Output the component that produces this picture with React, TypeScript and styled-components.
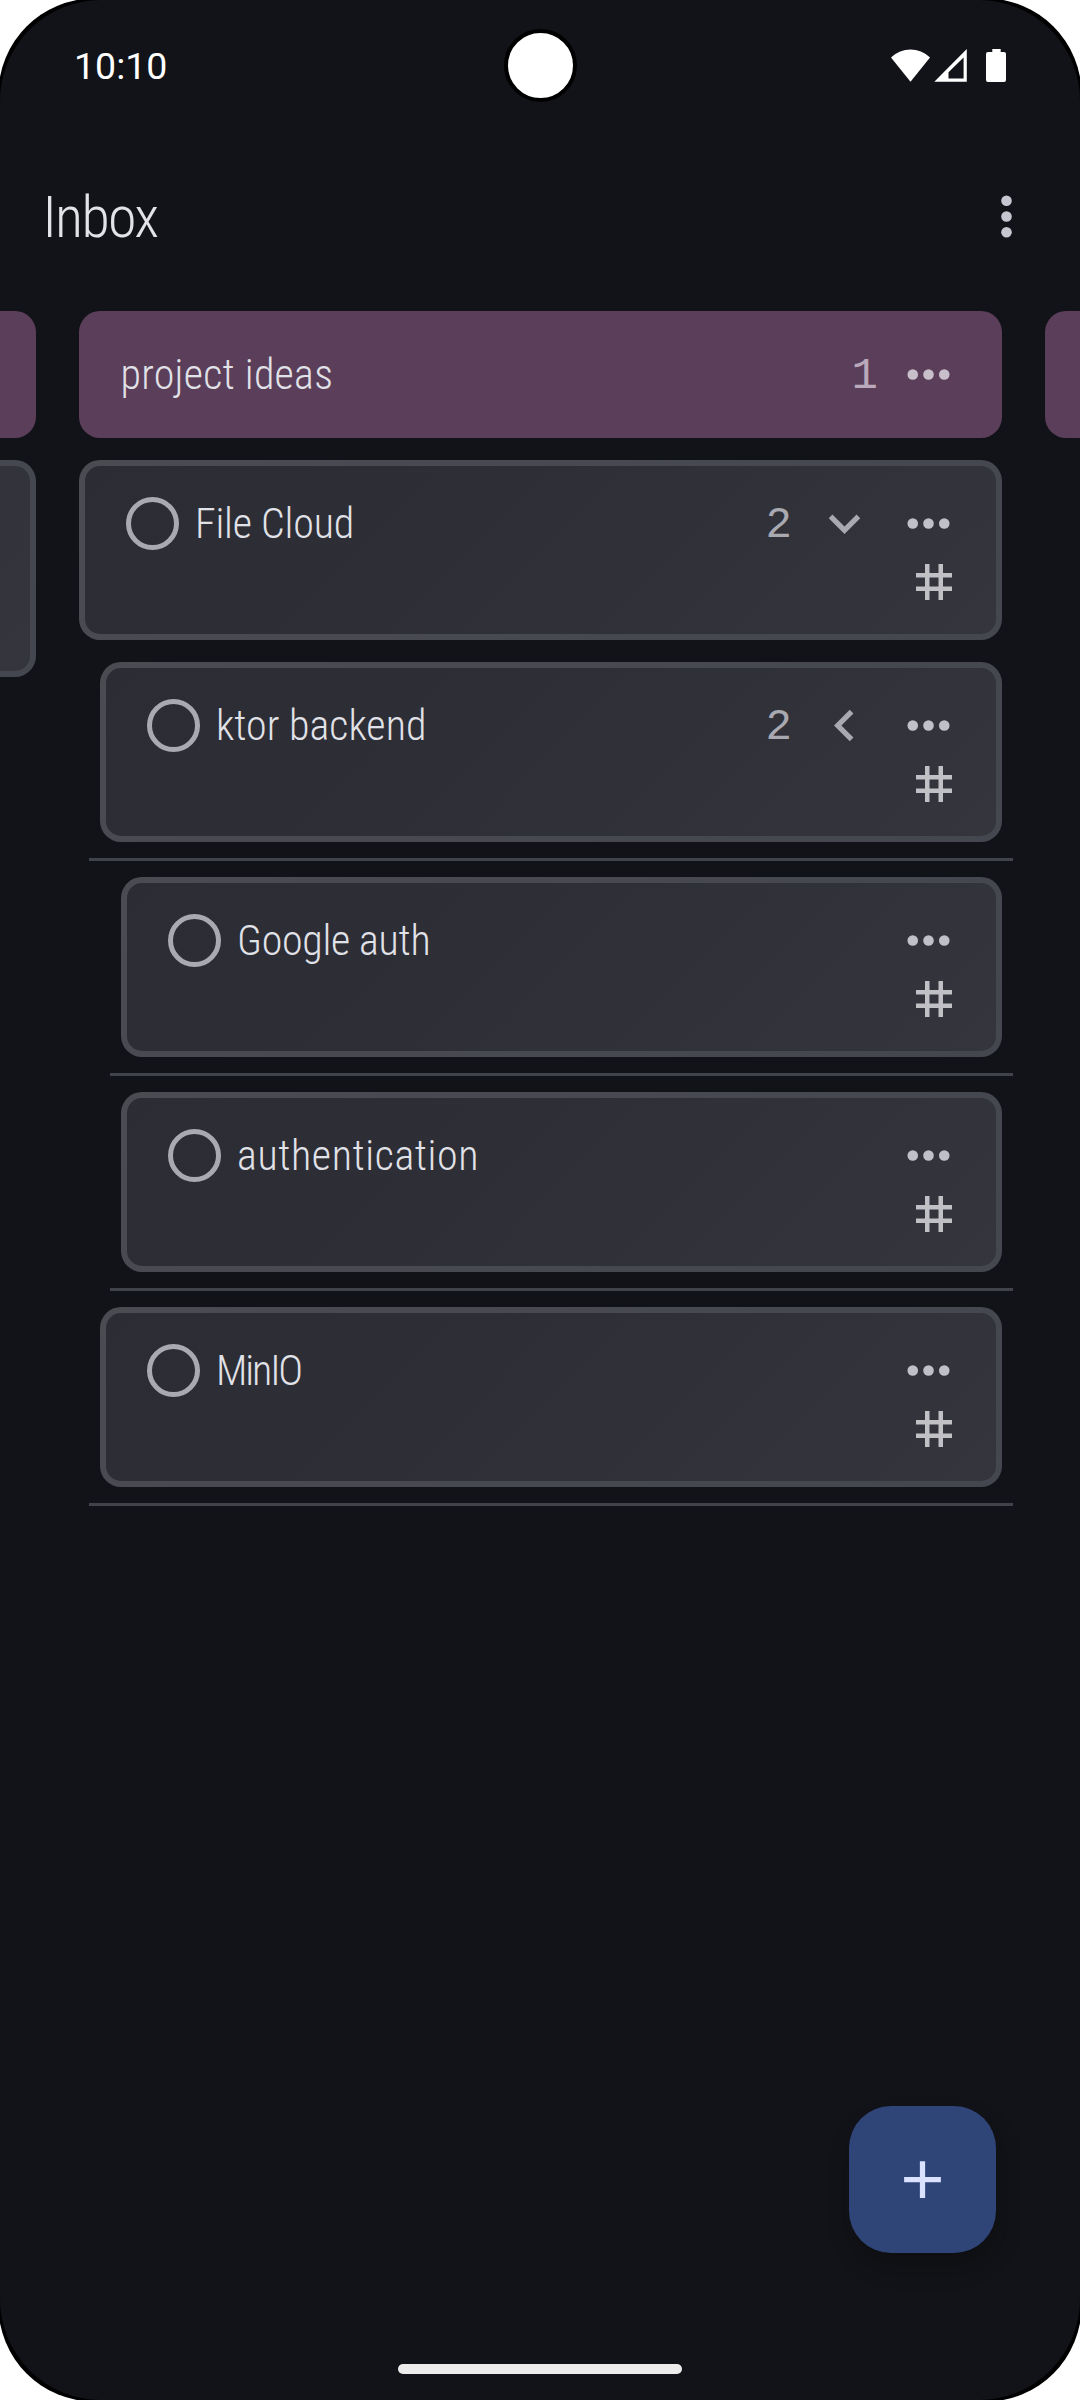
import React from "react";
import styled, { createGlobalStyle } from "styled-components";

const GlobalStyle = createGlobalStyle`
  html, body { margin: 0; background: #ffffff; }
  *, *::before, *::after { box-sizing: border-box; }
`;

const Device = styled.div`
  width: 1080px;
  height: 2400px;
  overflow: hidden;
  background: #000000;
  clip-path: inset(-1.6px round 96px);
`;

const Screen = styled.main`
  position: relative;
  display: flex;
  flex-direction: column;
  width: 100%;
  height: 100%;
  overflow: hidden;
  border-radius: 101px;
  background: #121318;
  font-family: "Roboto Condensed", Roboto, "Liberation Sans", sans-serif;
  font-stretch: 75%;
  font-weight: 300;
`;

const StatusBar = styled.header`
  display: flex;
  align-items: center;
  justify-content: space-between;
  height: 131px;
  padding: 0 74px 0 74px;
`;

const Clock = styled.time`
  color: #ffffff;
  font-family: Roboto, "Liberation Sans", sans-serif;
  font-size: 37.5px;
  font-stretch: 100%;
  font-weight: 400;
`;

const StatusIcons = styled.svg`
  display: block;
  width: 115px;
  height: 34px;
  fill: #ffffff;
`;

const Camera = styled.div`
  position: absolute;
  top: 29px;
  left: 503.5px;
  width: 73px;
  height: 73px;
  border: 4.5px solid #000000;
  border-radius: 50%;
  background: #ffffff;
`;

const AppBar = styled.div`
  display: flex;
  align-items: center;
  justify-content: space-between;
  height: 171px;
  padding: 0 42px 0 42.5px;
`;

const PageTitle = styled.h1`
  margin: 0;
  color: #e3e2e9;
  font-size: 58px;
  font-weight: 300;
  letter-spacing: -1.6px;
`;

const Board = styled.div`
  display: flex;
  gap: 43px;
  margin: 9px 0 0 -887px;
`;

const Column = styled.section`
  flex: 0 0 923px;
`;

const ColumnHeader = styled.div`
  display: flex;
  align-items: center;
  gap: 19px;
  height: 127px;
  padding: 0 42px 0 41.5px;
  margin-bottom: 22px;
  border-radius: 21px;
  background: #5b3e59;
`;

const Label = styled.span<{ $tracking: number }>`
  flex: 1;
  color: #e1e2e8;
  font-size: 42px;
  letter-spacing: ${(p) => p.$tracking}px;
  white-space: nowrap;
`;

const Count = styled.span<{ $color: string }>`
  padding-top: 2px;
  color: ${(p) => p.$color};
  font-family: "Liberation Mono", monospace;
  font-size: 44px;
  font-weight: 400;
`;

const Icon = styled.svg<{ $size: number; $color: string }>`
  display: block;
  flex: none;
  width: ${(p) => p.$size}px;
  height: ${(p) => p.$size}px;
  fill: ${(p) => p.$color};
`;

const Card = styled.article<{ $depth: number; $height?: number }>`
  display: flex;
  flex-direction: column;
  height: ${(p) => p.$height ?? 180}px;
  margin-left: ${(p) => p.$depth * 21}px;
  padding: 26px 36px 0 41px;
  border: 6px solid transparent;
  border-radius: 21px;
  background:
    linear-gradient(135deg, #2c2c34, #2d2e36 40%, #34353d) padding-box,
    linear-gradient(135deg, #4b4b52, #44474f) border-box;
`;

const CardRow = styled.div`
  display: flex;
  align-items: center;
  gap: 21px;
  height: 63px;
`;

const Checkbox = styled.span`
  flex: none;
  width: 53px;
  height: 53px;
  margin-right: -5px;
  border: 5.25px solid #a9a9b1;
  border-radius: 50%;
`;

const TagRow = styled.div`
  display: flex;
  justify-content: flex-end;
  margin-right: -0.5px;
`;

const Gap = styled.div`
  height: 22px;
`;

const DropLine = styled.div<{ $depth: number }>`
  height: 3px;
  margin: 16px -11px 16px ${(p) => p.$depth * 21 - 11}px;
  background: #41434a;
`;

const Fab = styled.button`
  position: absolute;
  right: 84px;
  bottom: 147px;
  display: grid;
  place-items: center;
  width: 147px;
  height: 147px;
  padding: 0;
  border: 0;
  border-radius: 42px;
  background: #2f4578;
  box-shadow: 3px 14px 22px rgba(10, 10, 10, 0.32);
`;

const HomeBar = styled.div`
  width: 284px;
  height: 10px;
  margin: auto auto 26px;
  border-radius: 5px;
  background: #ececec;
`;

const Dots = ({ color, vertical }: { color: string; vertical?: boolean }) => (
  <Icon $size={63} $color={color} viewBox="0 0 24 24">
    {[6, 12, 18].map((c) => (
      <circle key={c} cx={vertical ? 12 : c} cy={vertical ? c : 12} r={2.02} />
    ))}
  </Icon>
);

const Chevron = ({ open }: { open: boolean }) => (
  <Icon $size={63} $color="#a9a9b1" viewBox="0 0 24 24">
    <path
      d="M16.59 8.59 12 13.17 7.41 8.59 6 10l6 6 6-6z"
      transform={open ? undefined : "rotate(90 12 12)"}
    />
  </Icon>
);

const Hash = () => (
  <Icon $size={54} $color="#c0c0c5" viewBox="0 0 24 24">
    <path d="M20 10V8h-4V4h-2v4h-4V4H8v4H4v2h4v4H4v2h4v4h2v-4h4v4h2v-4h4v-2h-4v-4h4zm-6 4h-4v-4h4v4z" />
  </Icon>
);

type Task = {
  title: string;
  depth: number;
  tracking: number;
  count?: number;
  open?: boolean;
  line?: boolean;
};

const tasks: Task[] = [
  { title: "File Cloud", depth: 0, tracking: -0.2, count: 2, open: true },
  { title: "ktor backend", depth: 1, tracking: 0.05, count: 2, open: false, line: true },
  { title: "Google auth", depth: 2, tracking: -0.3, line: true },
  { title: "authentication", depth: 2, tracking: 0.6, line: true },
  { title: "MinIO", depth: 1, tracking: -2.1, line: true },
];

export default function App() {
  return (
    <>
      <GlobalStyle />
      <Device>
        <Screen>
          <StatusBar>
            <Clock>10:10</Clock>
            <StatusIcons viewBox="0 0 115 34">
              <path d="M0 8.5C11-2.2 28-2.2 39 8.5L19.5 32.7z" />
              <path fillRule="evenodd" d="M43.3 32.7 75.8 0v32.7zM57.5 29.6H72.6V8.4L57.5 23.2z" />
              <path d="M101.3 0h8.4v3.1h3.3a2 2 0 0 1 2 2v26a2 2 0 0 1-2 2H97a2 2 0 0 1-2-2v-26a2 2 0 0 1 2-2h4.3z" />
            </StatusIcons>
          </StatusBar>
          <Camera />
          <AppBar>
            <PageTitle>Inbox</PageTitle>
            <Dots vertical color="#c5c6d0" />
          </AppBar>
          <Board>
            <Column>
              <ColumnHeader />
              <Card $depth={0} $height={217} />
            </Column>
            <Column>
              <ColumnHeader>
                <Label $tracking={0.25}>project ideas</Label>
                <Count $color="#b9a9bb">1</Count>
                <Dots color="#c9bfcb" />
              </ColumnHeader>
              {tasks.map((t) => (
                <React.Fragment key={t.title}>
                  <Card $depth={t.depth}>
                    <CardRow>
                      <Checkbox />
                      <Label $tracking={t.tracking}>{t.title}</Label>
                      {t.count !== undefined && <Count $color="#a9a9b1">{t.count}</Count>}
                      {t.open !== undefined && <Chevron open={t.open} />}
                      <Dots color="#c0c0c7" />
                    </CardRow>
                    <TagRow>
                      <Hash />
                    </TagRow>
                  </Card>
                  {t.line ? <DropLine $depth={t.depth} /> : <Gap />}
                </React.Fragment>
              ))}
            </Column>
            <Column>
              <ColumnHeader />
            </Column>
          </Board>
          <Fab aria-label="Add">
            <Icon $size={63} $color="#dae2ff" viewBox="0 0 24 24">
              <path d="M19 13h-6v6h-2v-6H5v-2h6V5h2v6h6z" />
            </Icon>
          </Fab>
          <HomeBar />
        </Screen>
      </Device>
    </>
  );
}
